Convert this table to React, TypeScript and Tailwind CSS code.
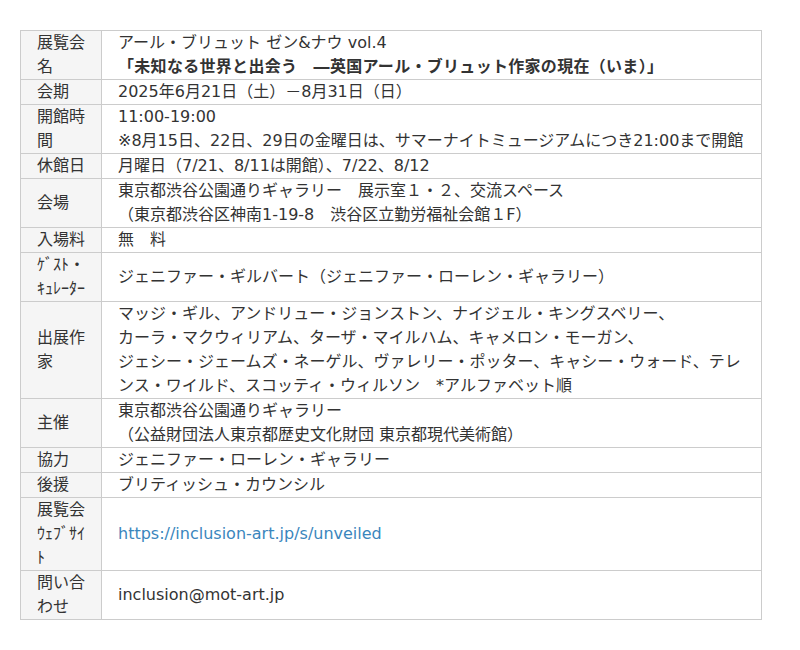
const ROWS: { label: string; content: React.ReactNode }[] = [
	{
		label: "展覧会名",
		content: (
			<>
				アール・ブリュット ゼン&ナウ vol.4
				<br />
				<b className="tracking-[0.3px]">「未知なる世界と出会う　―英国アール・ブリュット作家の現在（いま）」</b>
			</>
		),
	},
	{ label: "会期", content: "2025年6月21日（土）－8月31日（日）" },
	{
		label: "開館時間",
		content: (
			<>
				11:00-19:00
				<br />
				※8月15日、22日、29日の金曜日は、サマーナイトミュージアムにつき21:00まで開館
			</>
		),
	},
	{ label: "休館日", content: "月曜日（7/21、8/11は開館）、7/22、8/12" },
	{
		label: "会場",
		content: (
			<>
				東京都渋谷公園通りギャラリー　展示室１・２、交流スペース
				<br />
				（東京都渋谷区神南1-19-8　渋谷区立勤労福祉会館１F）
			</>
		),
	},
	{ label: "入場料", content: "無　料" },
	{ label: "ｹﾞｽﾄ・ｷｭﾚｰﾀｰ", content: "ジェニファー・ギルバート（ジェニファー・ローレン・ギャラリー）" },
	{
		label: "出展作家",
		content: (
			<>
				マッジ・ギル、アンドリュー・ジョンストン、ナイジェル・キングスベリー、
				<br />
				カーラ・マクウィリアム、ターザ・マイルハム、キャメロン・モーガン、
				<br />
				ジェシー・ジェームズ・ネーゲル、ヴァレリー・ポッター、キャシー・ウォード、テレンス・ワイルド、スコッティ・ウィルソン　*アルファベット順
			</>
		),
	},
	{
		label: "主催",
		content: (
			<>
				東京都渋谷公園通りギャラリー
				<br />
				（公益財団法人東京都歴史文化財団 東京都現代美術館）
			</>
		),
	},
	{ label: "協力", content: "ジェニファー・ローレン・ギャラリー" },
	{ label: "後援", content: "ブリティッシュ・カウンシル" },
	{
		label: "展覧会ｳｪﾌﾞｻｲﾄ",
		content: (
			<a href="#" className="text-[#3a86bd]">
				https://inclusion-art.jp/s/unveiled
			</a>
		),
	},
	{ label: "問い合わせ", content: "inclusion@mot-art.jp" },
];

export default function App() {
	return (
		<div className="min-h-[650px] bg-white pt-[30px] pl-[20px] font-['DejaVu_Sans','Noto_Sans_CJK_JP',sans-serif] text-[16px] leading-[24px] text-[#333]">
			<table className="w-[742px] border-collapse border border-[#ccc]">
				<tbody>
					{ROWS.map((row) => (
						<tr key={row.label}>
							<th className="w-[81px] border border-[#ccc] bg-[#f5f5f5] px-4 text-left align-middle font-normal break-all">
								{row.label}
							</th>
							<td className="border border-[#ccc] px-4 align-middle">{row.content}</td>
						</tr>
					))}
				</tbody>
			</table>
		</div>
	);
}
